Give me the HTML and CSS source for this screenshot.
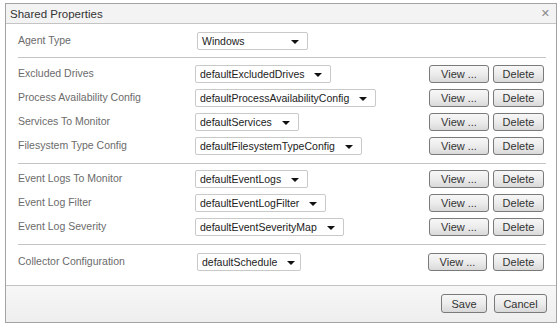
FILE: index.html
```html
<!DOCTYPE html>
<html lang="en">
<head>
    <meta charset="UTF-8">
    <title>Shared Properties</title>
    <link rel="stylesheet" href="styles.css">
</head>
<body>
    <div class="dialog">
        <div class="dialog-title">
            <span class="title-text">Shared Properties</span>
            <span class="close-btn">&#x2715;</span>
        </div>

        <div class="dialog-body">
            <div class="section section-first">
                <div class="row">
                    <div class="field-label">Agent Type</div>
                    <div class="select select-agent"><span>Windows</span><i class="caret"></i></div>
                </div>
            </div>

            <div class="section">
                <div class="row">
                    <div class="field-label">Excluded Drives</div>
                    <div class="select"><span>defaultExcludedDrives</span><i class="caret"></i></div>
                    <button class="btn btn-view">View ...</button>
                    <button class="btn btn-delete">Delete</button>
                </div>
                <div class="row">
                    <div class="field-label">Process Availability Config</div>
                    <div class="select"><span>defaultProcessAvailabilityConfig</span><i class="caret"></i></div>
                    <button class="btn btn-view">View ...</button>
                    <button class="btn btn-delete">Delete</button>
                </div>
                <div class="row">
                    <div class="field-label">Services To Monitor</div>
                    <div class="select"><span>defaultServices</span><i class="caret"></i></div>
                    <button class="btn btn-view">View ...</button>
                    <button class="btn btn-delete">Delete</button>
                </div>
                <div class="row">
                    <div class="field-label">Filesystem Type Config</div>
                    <div class="select"><span>defaultFilesystemTypeConfig</span><i class="caret"></i></div>
                    <button class="btn btn-view">View ...</button>
                    <button class="btn btn-delete">Delete</button>
                </div>
            </div>

            <div class="section section-events">
                <div class="row">
                    <div class="field-label">Event Logs To Monitor</div>
                    <div class="select"><span>defaultEventLogs</span><i class="caret"></i></div>
                    <button class="btn btn-view">View ...</button>
                    <button class="btn btn-delete">Delete</button>
                </div>
                <div class="row">
                    <div class="field-label">Event Log Filter</div>
                    <div class="select"><span>defaultEventLogFilter</span><i class="caret"></i></div>
                    <button class="btn btn-view">View ...</button>
                    <button class="btn btn-delete">Delete</button>
                </div>
                <div class="row">
                    <div class="field-label">Event Log Severity</div>
                    <div class="select"><span>defaultEventSeverityMap</span><i class="caret"></i></div>
                    <button class="btn btn-view">View ...</button>
                    <button class="btn btn-delete">Delete</button>
                </div>
            </div>

            <div class="section section-last">
                <div class="row">
                    <div class="field-label">Collector Configuration</div>
                    <div class="select select-schedule"><span>defaultSchedule</span><i class="caret"></i></div>
                    <button class="btn btn-view btn-view-wide">View ...</button>
                    <button class="btn btn-delete">Delete</button>
                </div>
            </div>
        </div>

        <div class="dialog-footer">
            <button class="btn btn-save">Save</button>
            <button class="btn btn-cancel">Cancel</button>
        </div>
    </div>
</body>
</html>
```

FILE: styles.css
```css
:root {
    --border-gray: #a3a3a3;
    --line-gray: #c4c4c4;
    --label-color: #6b6b6b;
    --text-dark: #222222;
}

* {
    box-sizing: border-box;
}

body {
    margin: 0;
    background-color: #ffffff;
    font-family: 'Liberation Sans', Arial, sans-serif;
    font-size: 10.5px;
    color: var(--text-dark);
}

.dialog {
    margin: 3px 0 0 5px;
    width: 552px;
    height: 320px;
    border: 1px solid var(--border-gray);
    background-color: #ffffff;
    display: flex;
    flex-direction: column;
}

.dialog-title {
    height: 20px;
    display: flex;
    align-items: center;
    justify-content: space-between;
    padding: 0 6px 0 4px;
    background-color: #f3f3f3;
    border-bottom: 1px solid var(--line-gray);
}

.title-text {
    font-size: 11.5px;
    color: #333333;
}

.close-btn {
    font-family: 'DejaVu Sans', sans-serif;
    font-size: 11px;
    color: #8a8a8a;
}

.dialog-body {
    flex: 1;
    padding: 0 10px 0 12px;
}

.section {
    display: flex;
    flex-direction: column;
    gap: 6px;
    padding: 7px 0 8px;
    border-bottom: 1px solid var(--line-gray);
}

.section-first {
    padding: 8px 0 7px;
}

.section-events {
    padding: 6px 0 8px;
}

.section-last {
    border-bottom: none;
    padding: 8px 0 0;
}

.row {
    display: grid;
    grid-template-columns: 173px 1fr auto auto;
    align-items: center;
    column-gap: 4px;
    height: 18px;
    padding-right: 2px;
}

.field-label {
    color: var(--label-color);
    margin-top: -2px;
}

.select {
    justify-self: start;
    height: 18px;
    display: inline-flex;
    align-items: center;
    gap: 10px;
    padding: 0 8px 0 4px;
    border: 1px solid #c9c9c9;
    border-radius: 2px;
    background-color: #ffffff;
    color: var(--text-dark);
    white-space: nowrap;
}

.select-agent {
    width: 111px;
    margin-left: 2px;
    justify-content: space-between;
}

.select-schedule {
    width: 104px;
    margin-left: 2px;
    justify-content: space-between;
}

.caret {
    width: 0;
    height: 0;
    border-left: 4px solid transparent;
    border-right: 4px solid transparent;
    border-top: 4px solid #111111;
    margin-top: 2px;
}

.btn {
    height: 18px;
    padding: 0;
    font-family: 'Liberation Sans', Arial, sans-serif;
    font-size: 11px;
    color: #333333;
    background: linear-gradient(to bottom, #f7f7f7 0%, #ececec 50%, #d9d9d9 100%);
    border: 1px solid #7a7a7a;
    border-radius: 3px;
}

.btn-view {
    width: 60px;
}

.btn-view-wide {
    width: 59px;
    margin-right: 2px;
}

.btn-delete {
    width: 51px;
}

.dialog-footer {
    height: 37px;
    display: flex;
    justify-content: flex-end;
    gap: 7px;
    padding: 8px 9px 0 0;
    border-top: 1px solid var(--line-gray);
    background: linear-gradient(to bottom, #f7f7f7, #eeeeee);
}

.btn-save {
    width: 46px;
    height: 19px;
}

.btn-cancel {
    width: 53px;
    height: 19px;
}
```
